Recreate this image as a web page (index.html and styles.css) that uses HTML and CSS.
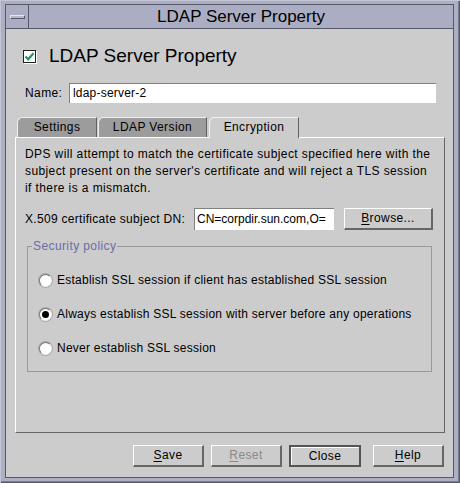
FILE: index.html
```html
<!DOCTYPE html>
<html>
<head>
<meta charset="utf-8">
<link rel="stylesheet" href="styles.css">
</head>
<body>
<div class="frame">
  <div class="window">
    <div class="titlebar">
      <div class="menu-btn"><span class="dash"></span></div>
      <div class="title">LDAP Server Property</div>
    </div>
    <div class="content">
      <div class="heading">
        <span class="check"><svg width="11" height="11" viewBox="0 0 11 11"><path d="M1.5 5.5 L4.2 8.3 L9.5 2.2" fill="none" stroke="#1e9a5c" stroke-width="2.2"/></svg></span>
        <span class="heading-text">LDAP Server Property</span>
      </div>
      <div class="name-row">
        <span class="label">Name:</span>
        <div class="field name-field">ldap-server-2</div>
      </div>
      <div class="tabs">
        <div class="tab tab-settings">Settings</div>
        <div class="tab tab-version">LDAP Version</div>
        <div class="tab tab-active">Encryption</div>
      </div>
      <div class="panel">
        <p class="desc">DPS will attempt to match the certificate subject specified here with the subject present on the server's certificate and will reject a TLS session if there is a mismatch.</p>
        <div class="dn-row">
          <span class="label">X.509 certificate subject DN:</span>
          <div class="field dn-field">CN=corpdir.sun.com,O=</div>
          <div class="btn browse"><u>B</u>rowse...</div>
        </div>
        <fieldset class="policy">
          <legend>Security policy</legend>
          <div class="radio-row"><span class="radio"></span><span>Establish SSL session if client has established SSL session</span></div>
          <div class="radio-row"><span class="radio on"></span><span>Always establish SSL session with server before any operations</span></div>
          <div class="radio-row"><span class="radio"></span><span>Never establish SSL session</span></div>
        </fieldset>
      </div>
      <div class="buttons">
        <div class="btn"><u>S</u>ave</div>
        <div class="btn disabled"><u>R</u>eset</div>
        <div class="btn default">Close</div>
        <div class="btn help"><u>H</u>elp</div>
      </div>
    </div>
  </div>
</div>
</body>
</html>
```
FILE: styles.css
```css
html, body {
  margin: 0;
  padding: 0;
}
body {
  width: 460px;
  height: 483px;
  overflow: hidden;
  font-family: "Liberation Sans", Arial, sans-serif;
  font-size: 12px;
  color: #000;
}
.frame {
  box-sizing: border-box;
  width: 460px;
  height: 483px;
  padding: 4px 6px 5px 5px;
  background: #adafc2;
  box-shadow: inset 1px 1px 0 #c4c6d6, inset -1px -1px 0 #55576a, inset -2px -2px 0 #7a7c90;
}
.window {
  box-sizing: border-box;
  width: 449px;
  height: 474px;
  border: 1px solid #55576a;
  display: flex;
  flex-direction: column;
}
.titlebar {
  height: 23px;
  border-bottom: 1px solid #55576a;
  background: #abaec2;
  display: flex;
}
.menu-btn {
  width: 22px;
  border-right: 1px solid #55576a;
  display: flex;
  align-items: center;
  justify-content: center;
}
.dash {
  box-sizing: border-box;
  width: 15px;
  height: 4px;
  border-top: 1px solid #e8e9f0;
  border-left: 1px solid #e8e9f0;
  border-bottom: 1px solid #55576a;
  border-right: 1px solid #55576a;
  background: #b6b8ca;
}
.title {
  flex: 1;
  text-align: center;
  font-size: 17px;
  line-height: 23px;
}
.content {
  flex: 1;
  background: #cccccc;
  padding: 16px 8px 0 9px;
  display: flex;
  flex-direction: column;
  letter-spacing: 0.4px;
}
.heading {
  display: flex;
  align-items: center;
  height: 22px;
  padding-left: 8px;
  letter-spacing: 0;
}
.check {
  box-sizing: border-box;
  width: 13px;
  height: 13px;
  background: #fff;
  border: 1px solid #222;
  box-shadow: 1px 1px 0 #fff;
  display: flex;
  align-items: center;
  justify-content: center;
}
.heading-text {
  margin-left: 13px;
  font-size: 19px;
}
.name-row {
  display: flex;
  align-items: center;
  margin-top: 16px;
  padding-left: 10px;
}
.name-row .label {
  width: 44px;
}
.field {
  box-sizing: border-box;
  height: 20px;
  background: #fff;
  border-top: 1px solid #808080;
  border-left: 1px solid #808080;
  padding: 0 3px;
  line-height: 19px;
  white-space: nowrap;
  overflow: hidden;
  letter-spacing: 0.2px;
}
.name-field {
  width: 367px;
}
.tabs {
  display: flex;
  margin-top: 14px;
  padding-left: 2px;
  height: 20px;
  position: relative;
  z-index: 1;
}
.tab {
  box-sizing: border-box;
  height: 20px;
  background: #9c9c9c;
  border-top: 1px solid #f0f0f0;
  border-left: 1px solid #f0f0f0;
  border-right: 1px solid #606060;
  border-top-left-radius: 5px 6px;
  text-align: center;
  line-height: 19px;
  margin-right: 1px;
}
.tab-settings { width: 80px; }
.tab-version { width: 109px; }
.tab-active {
  width: 90px;
  height: 21px;
  background: #cccccc;
  margin-left: 1px;
}
.panel {
  box-sizing: border-box;
  height: 296px;
  width: 430px;
  border-top: 1px solid #fff;
  border-left: 1px solid #fff;
  border-right: 1px solid #666;
  border-bottom: 1px solid #666;
  padding: 8px 9px 0 9px;
}
.desc {
  margin: 0;
  line-height: 17px;
  width: 412px;
  letter-spacing: 0.4px;
}
.dn-row {
  display: flex;
  align-items: center;
  margin-top: 10px;
  height: 23px;
}
.dn-row .label {
  width: 169px;
  letter-spacing: 0.3px;
}
.dn-field {
  width: 140px;
  height: 22px;
  line-height: 21px;
  padding: 0 2px;
  letter-spacing: 0;
}
.btn {
  box-sizing: border-box;
  width: 71px;
  height: 22px;
  border-top: 1px solid #fff;
  border-left: 1px solid #fff;
  border-right: 2px solid #666;
  border-bottom: 2px solid #666;
  text-align: center;
  line-height: 19px;
  background: #cccccc;
}
.btn u {
  text-decoration: underline;
  text-underline-offset: 2px;
}
.browse {
  width: 89px;
  margin-left: 10px;
}
.policy {
  margin: 9px 0 0 2px;
  width: 405px;
  height: 133px;
  box-sizing: border-box;
  padding: 0 0 0 11px;
  border: 1px solid #999;
}
.policy legend {
  color: #6a6da8;
  padding: 0 1px;
  margin-left: -7px;
  line-height: 14px;
}
.radio-row {
  display: flex;
  align-items: center;
  height: 34px;
  letter-spacing: 0.25px;
}
.radio-row:first-of-type {
  margin-top: 10px;
}
.radio {
  box-sizing: border-box;
  width: 13px;
  height: 13px;
  border-radius: 50%;
  background: #fff;
  border: 1px solid #777;
  border-right-color: #eee;
  border-bottom-color: #eee;
  box-shadow: 0 0 0 1px #aaa;
  margin-right: 5px;
  display: flex;
  align-items: center;
  justify-content: center;
}
.radio.on::after {
  content: "";
  width: 7px;
  height: 7px;
  border-radius: 50%;
  background: #000;
}
.buttons {
  display: flex;
  justify-content: flex-end;
  margin-top: 12px;
  padding-right: 1px;
}
.buttons .btn {
  margin-left: 7px;
}
.buttons .btn.help {
  margin-left: 12px;
}
.btn.default {
  width: 72px;
  border: 2px solid #555;
  box-shadow: inset 1px 1px 0 #fff;
}
.btn.disabled {
  color: #8a8a8a;
}
```
